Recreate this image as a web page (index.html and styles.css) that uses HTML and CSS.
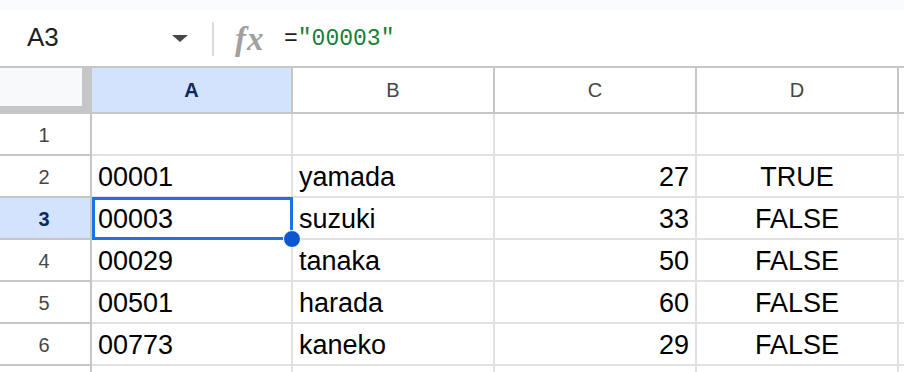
FILE: index.html
```html
<!DOCTYPE html>
<html lang="en">
<head>
    <meta charset="UTF-8">
    <title>Sheet</title>
    <link rel="stylesheet" href="styles.css">
</head>
<body>

<div class="top-strip"></div>

<div class="formula-bar">
    <div class="name-box">
        <span class="name">A3</span>
        <span class="caret"></span>
    </div>
    <div class="sep"></div>
    <div class="fx">fx</div>
    <div class="formula">=<span class="str">"00003"</span></div>
</div>

<div class="sheet">
    <div class="corner"></div>
    <div class="col-head sel">A</div>
    <div class="col-head">B</div>
    <div class="col-head">C</div>
    <div class="col-head">D</div>
    <div class="col-head"></div>

    <div class="row-head">1</div>
    <div class="cell"></div>
    <div class="cell"></div>
    <div class="cell"></div>
    <div class="cell"></div>
    <div class="cell"></div>

    <div class="row-head">2</div>
    <div class="cell">00001</div>
    <div class="cell">yamada</div>
    <div class="cell num">27</div>
    <div class="cell bool">TRUE</div>
    <div class="cell"></div>

    <div class="row-head sel">3</div>
    <div class="cell active">00003</div>
    <div class="cell">suzuki</div>
    <div class="cell num">33</div>
    <div class="cell bool">FALSE</div>
    <div class="cell"></div>

    <div class="row-head">4</div>
    <div class="cell">00029</div>
    <div class="cell">tanaka</div>
    <div class="cell num">50</div>
    <div class="cell bool">FALSE</div>
    <div class="cell"></div>

    <div class="row-head">5</div>
    <div class="cell">00501</div>
    <div class="cell">harada</div>
    <div class="cell num">60</div>
    <div class="cell bool">FALSE</div>
    <div class="cell"></div>

    <div class="row-head">6</div>
    <div class="cell">00773</div>
    <div class="cell">kaneko</div>
    <div class="cell num">29</div>
    <div class="cell bool">FALSE</div>
    <div class="cell"></div>

    <div class="row-head"></div>
    <div class="cell"></div>
    <div class="cell"></div>
    <div class="cell"></div>
    <div class="cell"></div>
    <div class="cell"></div>
</div>

</body>
</html>
```

FILE: styles.css
```css
* {
    box-sizing: border-box;
}
body {
    margin: 0;
    font-family: "Liberation Sans", Arial, sans-serif;
    background-color: #fff;
    overflow: hidden;
    height: 372px;
}
.top-strip {
    height: 10px;
    background-color: #f9fbfd;
}
.formula-bar {
    height: 56px;
    display: flex;
    align-items: center;
}
.name-box {
    width: 212px;
    display: flex;
    align-items: center;
    justify-content: space-between;
    padding: 0 24px 0 27px;
}
.name {
    font-size: 26px;
    color: #1f1f1f;
    margin-top: -2px;
}
.caret {
    width: 0;
    height: 0;
    border-left: 8px solid transparent;
    border-right: 8px solid transparent;
    border-top: 7px solid #444746;
}
.sep {
    width: 2px;
    height: 34px;
    background-color: #dadce0;
    margin-top: 1px;
}
.fx {
    font-family: "Liberation Serif", serif;
    font-style: italic;
    font-weight: bold;
    font-size: 33px;
    color: #a0a0a0;
    letter-spacing: 1px;
    margin-left: 21px;
    width: 49px;
    margin-top: 2px;
}
.formula {
    font-family: "Liberation Mono", monospace;
    font-size: 23px;
    color: #1f1f1f;
    margin-top: 1px;
}
.str {
    color: #188038;
}

.sheet {
    display: grid;
    grid-template-columns: 92px 201px 202px 202px 202px 1fr;
    grid-template-rows: 46px repeat(7, 42px);
    border-top: 2px solid #c4c7c5;
}
.corner {
    background-color: #f8f9fa;
    border-right: 10px solid #c4c7c5;
    border-bottom: 8px solid #c4c7c5;
}
.col-head {
    display: flex;
    align-items: center;
    justify-content: center;
    font-size: 20px;
    color: #444746;
    border-right: 2px solid #c4c7c5;
    border-bottom: 2px solid #c4c7c5;
}
.row-head {
    display: flex;
    align-items: center;
    justify-content: center;
    font-size: 20px;
    color: #444746;
    border-right: 2px solid #c4c7c5;
    border-bottom: 2px solid #c4c7c5;
    padding: 2px 2px 0 0;
}
.col-head.sel,
.row-head.sel {
    background-color: #d3e3fd;
    color: #0b2a5e;
    font-weight: bold;
}
.cell {
    display: flex;
    align-items: center;
    padding: 3px 6px 0;
    font-size: 27px;
    color: #000;
    border-right: 2px solid #e1e1e1;
    border-bottom: 2px solid #e1e1e1;
    white-space: nowrap;
}
.cell.num {
    justify-content: flex-end;
}
.cell.bool {
    justify-content: center;
}
.cell.active {
    position: relative;
    z-index: 2;
}
.cell.active::after {
    content: "";
    position: absolute;
    top: -1px;
    left: 0;
    right: -2px;
    bottom: -2px;
    border: 3px solid #1a73e8;
}
.cell.active::before {
    content: "";
    position: absolute;
    right: -10px;
    bottom: -10px;
    width: 16px;
    height: 16px;
    border-radius: 50%;
    background-color: #0b57d0;
    border: 1px solid #fff;
    z-index: 3;
}
```
